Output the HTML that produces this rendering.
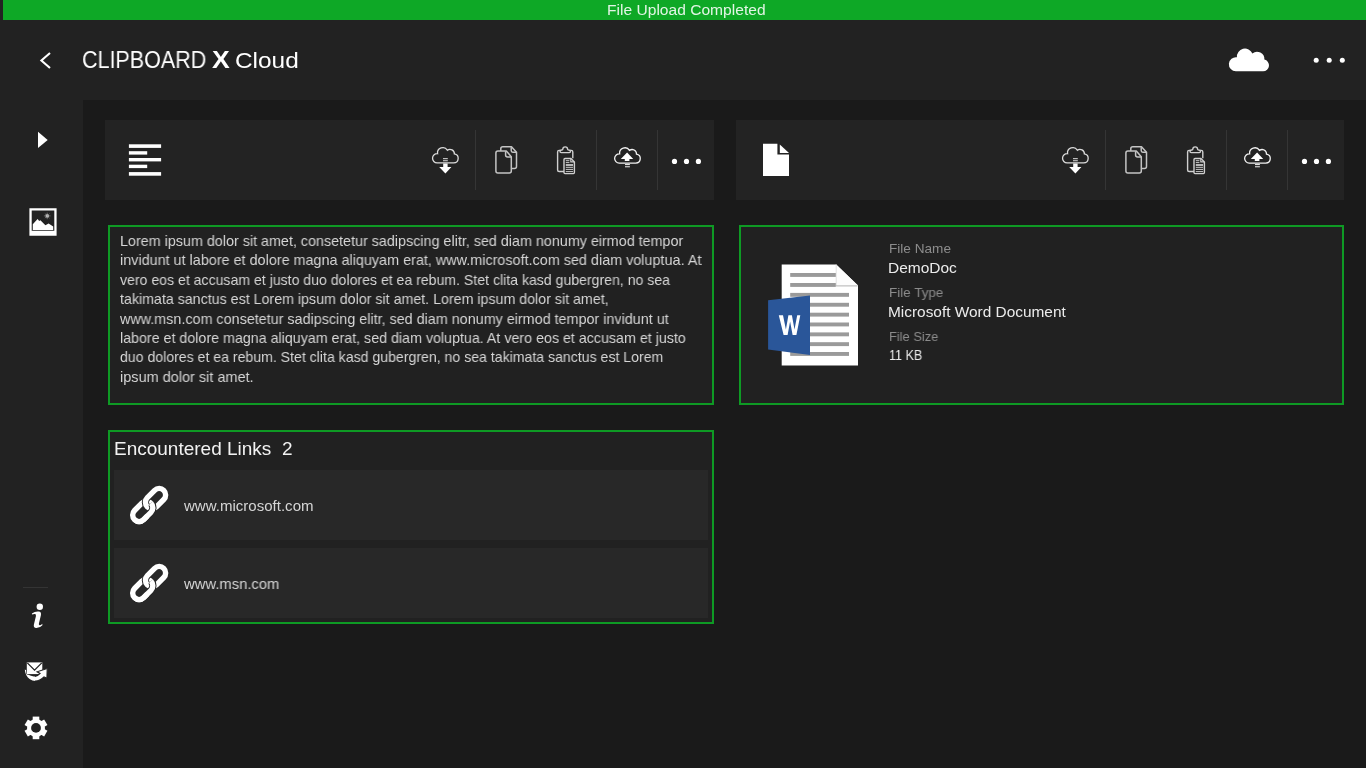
<!DOCTYPE html>
<html lang="en">
<head>
<meta charset="utf-8">
<title>CLIPBOARD X Cloud</title>
<style>
*{margin:0;padding:0;box-sizing:border-box}
html,body{width:1366px;height:768px;overflow:hidden;background:#1a1a1a;font-family:"Liberation Sans",sans-serif}
#app{position:relative;width:1366px;height:768px;overflow:hidden;background:#1a1a1a}
.abs,.grp{position:absolute}
.grp{left:0;top:0;width:0;height:0;font:inherit}
#hdr{left:0;top:0;width:1366px;height:100px;background:#222222}
#bar{left:3px;top:0;width:1363px;height:20px;background:#0ea826}
#side{left:0;top:100px;width:83px;height:668px;background:#222222}
.panel{background:#232323}
.box{border:2px solid #0e9a24;background:#212121}
.row{background:#282828}
.sep{width:1px;height:60px;top:130px;background:#353535}
.t{position:absolute;white-space:nowrap;transform-origin:0 0;line-height:1;will-change:transform}
#icons{left:0;top:0;pointer-events:none}
</style>
</head>
<body>
<div id="app">

<header class="grp">
<div id="hdr" class="abs"></div>
<div id="bar" class="abs"></div>
<span class="t" id="t_bar" style="left:606.55px;top:2px;font-size:15.4px;color:#e2f5e5;transform:scaleX(1.0130);">File Upload Completed</span>
<h1 class="grp">
<span class="t" id="t_clip" style="left:82.41px;top:49px;font-size:23.2px;color:#ffffff;transform:scaleX(0.9273);">CLIPBOARD</span>
<span class="t" id="t_x" style="left:212.43px;top:48px;font-size:24.8px;color:#ffffff;font-weight:bold;transform:scaleX(1.0719);">X</span>
<span class="t" id="t_cloud" style="left:234.80px;top:49px;font-size:22.8px;color:#ffffff;transform:scaleX(1.0700);">Cloud</span>
</h1>
</header>

<nav class="grp">
<div id="side" class="abs"></div>
<div class="abs" style="left:23px;top:587px;width:25px;height:1px;background:#343434"></div>
</nav>

<main class="grp">

<section class="grp" id="text-item">
<div class="abs panel" style="left:105px;top:120px;width:609px;height:80px"></div>
<div class="abs sep" style="left:475px"></div>
<div class="abs sep" style="left:596px"></div>
<div class="abs sep" style="left:657px"></div>
<div class="abs box" style="left:108px;top:225px;width:606px;height:180px"></div>
<p class="grp">
<span class="t" id="p1" style="left:119.80px;top:234px;font-size:14.6px;color:#d6d6d6;transform:scaleX(0.9822);">Lorem ipsum dolor sit amet, consetetur sadipscing elitr, sed diam nonumy eirmod tempor</span>
<span class="t" id="p2" style="left:119.80px;top:253px;font-size:14.6px;color:#d6d6d6;transform:scaleX(0.9857);">invidunt ut labore et dolore magna aliquyam erat, www.microsoft.com sed diam voluptua. At</span>
<span class="t" id="p3" style="left:119.80px;top:273px;font-size:14.6px;color:#d6d6d6;transform:scaleX(0.9658);">vero eos et accusam et justo duo dolores et ea rebum. Stet clita kasd gubergren, no sea</span>
<span class="t" id="p4" style="left:119.80px;top:292px;font-size:14.6px;color:#d6d6d6;transform:scaleX(0.9748);">takimata sanctus est Lorem ipsum dolor sit amet. Lorem ipsum dolor sit amet,</span>
<span class="t" id="p5" style="left:119.80px;top:312px;font-size:14.6px;color:#d6d6d6;transform:scaleX(0.9831);">www.msn.com consetetur sadipscing elitr, sed diam nonumy eirmod tempor invidunt ut</span>
<span class="t" id="p6" style="left:119.80px;top:331px;font-size:14.6px;color:#d6d6d6;transform:scaleX(0.9768);">labore et dolore magna aliquyam erat, sed diam voluptua. At vero eos et accusam et justo</span>
<span class="t" id="p7" style="left:119.80px;top:350px;font-size:14.6px;color:#d6d6d6;transform:scaleX(0.9663);">duo dolores et ea rebum. Stet clita kasd gubergren, no sea takimata sanctus est Lorem</span>
<span class="t" id="p8" style="left:119.80px;top:370px;font-size:14.6px;color:#d6d6d6;transform:scaleX(0.9927);">ipsum dolor sit amet.</span>
</p>
<div class="abs box" style="left:108px;top:430px;width:606px;height:194px"></div>
<span class="t" id="t_enc" style="left:113.69px;top:440px;font-size:18.6px;color:#f2f2f2;transform:scaleX(1.0216);">Encountered Links  2</span>
<div class="abs row" style="left:114px;top:470px;width:594px;height:70px"></div>
<span class="t" id="l1" style="left:184.00px;top:499px;font-size:14.9px;color:#d6d6d6;transform:scaleX(1.0101);">www.microsoft.com</span>
<div class="abs row" style="left:114px;top:548px;width:594px;height:70px"></div>
<span class="t" id="l2" style="left:184.00px;top:577px;font-size:14.9px;color:#d6d6d6;transform:scaleX(0.9939);">www.msn.com</span>
</section>

<section class="grp" id="file-item">
<div class="abs panel" style="left:736px;top:120px;width:608px;height:80px"></div>
<div class="abs sep" style="left:1105px"></div>
<div class="abs sep" style="left:1226px"></div>
<div class="abs sep" style="left:1287px"></div>
<div class="abs box" style="left:739px;top:225px;width:605px;height:180px"></div>
<span class="t" id="fn_l" style="left:888.80px;top:242px;font-size:13.6px;color:#8c8c8c;transform:scaleX(0.9982);">File Name</span>
<span class="t" id="fn_v" style="left:888.39px;top:260px;font-size:15.2px;color:#ececec;transform:scaleX(1.0194);">DemoDoc</span>
<span class="t" id="ft_l" style="left:888.80px;top:286px;font-size:13.6px;color:#8c8c8c;transform:scaleX(0.9898);">File Type</span>
<span class="t" id="ft_v" style="left:888.38px;top:304px;font-size:15.2px;color:#ececec;transform:scaleX(1.0142);">Microsoft Word Document</span>
<span class="t" id="fs_l" style="left:888.80px;top:330px;font-size:13.6px;color:#8c8c8c;transform:scaleX(0.9472);">File Size</span>
<span class="t" id="fs_v" style="left:888.80px;top:347px;font-size:15.2px;color:#ececec;transform:scaleX(0.8291);">11 KB</span>
</section>

</main>

<svg id="icons" class="abs" width="1366" height="768" viewBox="0 0 1366 768">
<defs>
<g id="tb">
<!-- download cloud -->
<path d="M437.15 162.90A4.60 4.60 0 1 1 437.56 153.72A5.30 5.30 0 0 1 447.37 150.27A4.40 4.40 0 0 1 454.40 153.96A4.50 4.50 0 0 1 453.65 162.90Z" fill="none" stroke="#dcdcdc" stroke-width="1.3"/>
<rect x="443" y="158" width="4.8" height="1.2" fill="#bdbdbd"/>
<rect x="443" y="160.1" width="4.8" height="1.2" fill="#bdbdbd"/>
<path d="M443.2 163.6H447.6V167H451.4L445.4 173.4L439.2 167H443.2Z" fill="#ffffff"/>
<!-- copy -->
<g fill="none" stroke="#c4c4c4" stroke-width="1.5" stroke-linejoin="round">
<path d="M500.8 150.9V148.8Q500.8 146.8 502.8 146.8H511.5L516.5 152.2V166.6Q516.5 168.6 514.5 168.6H511.3"/>
<path d="M511.2 147.2V150.6Q511.2 152.2 512.8 152.2H516.3"/>
<path d="M497.9 150.9H506.3L511.3 156.7V171.1Q511.3 173.1 509.3 173.1H497.9Q495.9 173.1 495.9 171.1V152.9Q495.9 150.9 497.9 150.9Z"/>
<path d="M505.6 151.2V154.9Q505.6 156.9 507.6 156.9H511.1"/>
</g>
<!-- paste -->
<g fill="none" stroke="#cfcfcf" stroke-width="1.4" stroke-linejoin="round">
<path d="M564 171.5H559.1Q557.6 171.5 557.6 170V151.9Q557.6 150.4 559.1 150.4H560.4"/>
<path d="M570.2 150.4H571.3Q572.8 150.4 572.8 151.9V158.3"/>
<path d="M561.2 152.6Q560 152.6 560 151.5Q560 150.1 561.6 150Q562.8 149.9 562.8 149.3A2.4 2.4 0 0 1 567.6 149.3Q567.6 149.9 568.8 150Q570.5 150.1 570.5 151.5Q570.5 152.6 569.3 152.6Z"/>
<path d="M565 158.5H571L574.4 161.9V172.6Q574.4 173.6 573.4 173.6H565Q564 173.6 564 172.6V159.5Q564 158.5 565 158.5Z"/>
<path d="M570.8 158.8V161.9H574.2" stroke-width="1.1"/>
</g>
<g fill="#b8b8b8">
<rect x="565.8" y="160.1" width="3.6" height="1.1"/>
<rect x="565.8" y="162" width="3.6" height="1.1"/>
<rect x="565.8" y="164" width="7.2" height="2"/>
<rect x="565.8" y="166.8" width="7.2" height="1.1"/>
<rect x="565.8" y="168.9" width="7.2" height="1.1"/>
<rect x="565.8" y="171" width="7.2" height="1.1"/>
</g>
<!-- upload cloud -->
<g transform="translate(182.1,0.15)">
<path d="M437.15 162.90A4.60 4.60 0 1 1 437.56 153.72A5.30 5.30 0 0 1 447.37 150.27A4.40 4.40 0 0 1 454.40 153.96A4.50 4.50 0 0 1 453.65 162.90Z" fill="none" stroke="#f2f2f2" stroke-width="1.3"/>
</g>
<path d="M627.1 152.5L633.2 158.9H629.4V161.1H624.8V158.9H620.8Z" fill="#ffffff"/>
<rect x="625" y="164" width="4.9" height="1.1" fill="#e0e0e0"/>
<rect x="625" y="166.2" width="4.9" height="1.1" fill="#e0e0e0"/>
<!-- more -->
<circle cx="674.5" cy="161.4" r="2.6" fill="#fff"/>
<circle cx="686.5" cy="161.4" r="2.6" fill="#fff"/>
<circle cx="698.4" cy="161.4" r="2.6" fill="#fff"/>
</g>
<clipPath id="cu"><rect x="-9" y="-30" width="18" height="30"/></clipPath>
<clipPath id="clh"><rect x="-9" y="0" width="18" height="30"/></clipPath>
<clipPath id="cl"><rect x="-30" y="0" width="60" height="30"/></clipPath>
<g id="link">
<g transform="translate(149.15,505) rotate(-45)" fill="none" stroke-width="5.4">
<rect x="-20.65" y="-6.45" width="23.2" height="12.9" rx="6.45" stroke="#ffffff"/>
<rect x="-2.55" y="-6.45" width="23.2" height="12.9" rx="6.45" stroke="#282828" stroke-width="7.4" clip-path="url(#cu)"/>
<rect x="-2.55" y="-6.45" width="23.2" height="12.9" rx="6.45" stroke="#ffffff"/>
<rect x="-20.65" y="-6.45" width="23.2" height="12.9" rx="6.45" stroke="#282828" stroke-width="7.4" clip-path="url(#clh)"/>
<rect x="-20.65" y="-6.45" width="23.2" height="12.9" rx="6.45" stroke="#ffffff" clip-path="url(#cl)"/>
</g>
</g>
</defs>

<!-- header -->
<path d="M50 53L41.4 60.5L50 68" fill="none" stroke="#ffffff" stroke-width="2.1"/>
<path d="M1235.90 71.25A7.00 7.00 0 1 1 1236.92 57.33A8.10 8.10 0 0 1 1252.40 53.40A7.40 7.40 0 0 1 1264.39 59.59A5.90 5.90 0 0 1 1263.10 71.25Z" fill="#ffffff"/>
<circle cx="1316.2" cy="60.2" r="2.5" fill="#fff"/>
<circle cx="1329.2" cy="60.2" r="2.5" fill="#fff"/>
<circle cx="1342.3" cy="60.2" r="2.5" fill="#fff"/>

<!-- sidebar -->
<path d="M38 131.8L47.7 139.9L38 148.1Z" fill="#ffffff"/>
<!-- image icon -->
<path d="M29.4 208.2H56.6V235.7H29.4Z M31.7 210.5V230.8H54.3V210.5Z" fill="#ffffff" fill-rule="evenodd"/>
<path d="M32.8 229.9V224.2L37.6 219L39.2 221L40.4 220.2L45.4 225.2L48.6 223.6L53.2 226.4V229.9Z" fill="#ffffff"/>
<circle cx="47.2" cy="215.9" r="1.6" fill="#ffffff"/>
<g stroke="#9a9a9a" stroke-width="0.6">
<path d="M47.2 212.6V219.2M43.9 215.9H50.5M44.9 213.6L49.5 218.2M49.5 213.6L44.9 218.2"/>
</g>
<!-- info -->
<circle cx="39.8" cy="606.8" r="3.2" fill="#fff"/>
<path d="M31.9 613.4Q35 611.3 38.6 611.6Q41.6 611.9 40.9 615.2L38.9 623.6Q38.5 625.5 40.1 625.2Q41.2 625 42.3 623.8L42.4 625.2Q39.6 628.2 36.2 628.1Q33.2 627.9 33.9 624.6L35.9 616.2Q36.4 614.2 34.8 614.1Q33.4 614 32 614.6Z" fill="#ffffff"/>
<!-- feedback mail -->
<clipPath id="cm"><rect x="35" y="660" width="15" height="24"/></clipPath>
<path d="M24.8 669.5C25 673.5 26.8 676.8 29.6 679C32.5 681.1 36.5 681.5 39.6 680C41.4 679.2 42.9 678 44 677L46.9 678.3L47.2 668.6L37.1 671.8L40.1 673.4C38.5 675.3 36.5 676.3 34.3 676.4C31.5 676.5 28.8 675.3 27.3 673.6C26.6 672.6 26.3 671.2 26.2 670.2Z" fill="#ffffff"/>
<path d="M26.8 662.4H42.3V674.1H26.8Z" fill="#ffffff" stroke="#222" stroke-width="1" paint-order="stroke"/>
<path d="M27.3 662.9L34.55 670.2L41.8 662.9" fill="none" stroke="#222" stroke-width="1.3"/>
<path d="M24.8 669.5C25 673.5 26.8 676.8 29.6 679C32.5 681.1 36.5 681.5 39.6 680C41.4 679.2 42.9 678 44 677L46.9 678.3L47.2 668.6L37.1 671.8L40.1 673.4C38.5 675.3 36.5 676.3 34.3 676.4C31.5 676.5 28.8 675.3 27.3 673.6C26.6 672.6 26.3 671.2 26.2 670.2Z" fill="#ffffff" stroke="#222" stroke-width="1.1" clip-path="url(#cm)"/>
<!-- gear -->
<g transform="translate(36,727.9)">
<g fill="#ffffff">
<circle r="9"/>
<rect x="-3.3" y="-11.3" width="6.6" height="22.6"/>
<rect x="-3.3" y="-11.3" width="6.6" height="22.6" transform="rotate(60)"/>
<rect x="-3.3" y="-11.3" width="6.6" height="22.6" transform="rotate(120)"/>
</g>
<circle r="4.9" fill="#222"/>
</g>

<!-- left toolbar -->
<g fill="#ffffff">
<rect x="128.9" y="144.3" width="32.2" height="3.6"/>
<rect x="128.9" y="151.2" width="18.3" height="3.4"/>
<rect x="128.9" y="158" width="32.2" height="3.4"/>
<rect x="128.9" y="164.7" width="18.3" height="3.4"/>
<rect x="128.9" y="172.1" width="32.2" height="3.6"/>
</g>
<use href="#tb"/>
<use href="#tb" transform="translate(630,0)"/>
<!-- doc icon -->
<path d="M763 143.8H777.4V154.6H789V176H763Z" fill="#ffffff"/>
<path d="M779.8 144.4L789 153H779.8Z" fill="#ffffff"/>

<!-- links -->
<use href="#link"/>
<use href="#link" transform="translate(0,78)"/>

<!-- word icon -->
<path d="M781.7 264.4H836.2L858 285.5V365.6H781.7Z" fill="#ffffff"/>
<path d="M836.2 264.4V285.5H858Z" fill="#fdfdfd"/>
<path d="M836.2 264.4V285.6" fill="none" stroke="#d9d9d9" stroke-width="0.8"/>
<path d="M835.8 285.9H857.6" fill="none" stroke="#a8a8a8" stroke-width="0.9"/>
<g fill="#9a9a9a">
<rect x="790.2" y="273" width="45.6" height="3.9"/>
<rect x="790.2" y="283" width="45.6" height="3.9"/>
<rect x="790.2" y="292.9" width="58.8" height="3.9"/>
<rect x="790.2" y="302.8" width="58.8" height="3.9"/>
<rect x="790.2" y="312.7" width="58.8" height="3.9"/>
<rect x="790.2" y="322.5" width="58.8" height="3.9"/>
<rect x="790.2" y="332.4" width="58.8" height="3.9"/>
<rect x="790.2" y="342.2" width="58.8" height="3.9"/>
<rect x="790.2" y="352" width="58.8" height="3.9"/>
</g>
<path d="M768.1 300.3L810 295.6V355L768.1 349.5Z" fill="#2a5699"/>
<path d="M778.8 315.2H783L785.9 329.4L788.4 315.2H791.9L794.5 329.4L797.2 315.2H800.3L796.4 335H792.6L790.1 321.4L787.6 335H783.6Z" fill="#ffffff"/>

</svg>
</div>
</body>
</html>
